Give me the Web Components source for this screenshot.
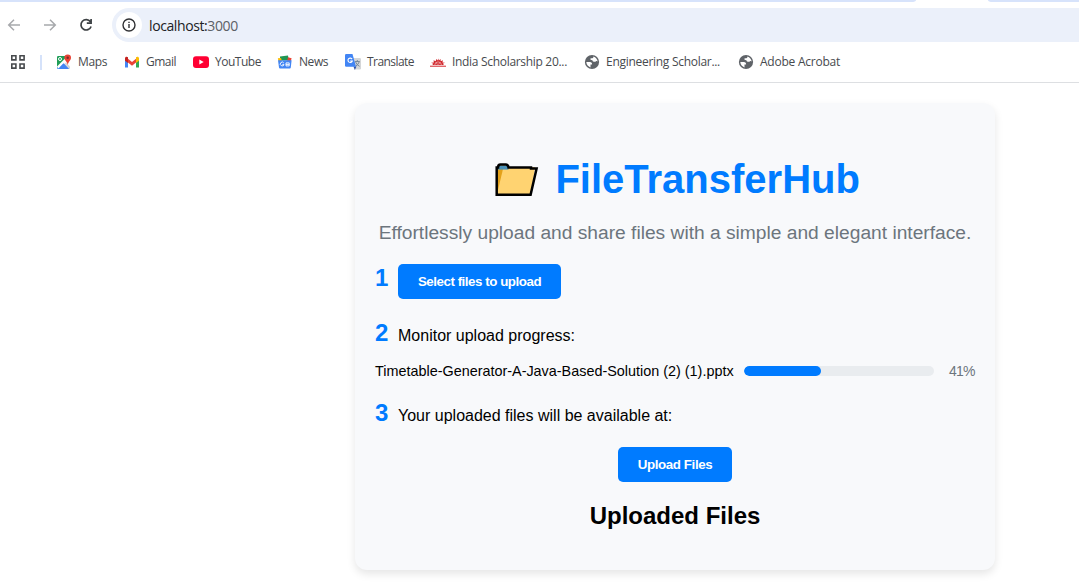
<!DOCTYPE html>
<html lang="en">
<head>
<meta charset="utf-8">
<title>FileTransferHub</title>
<style>
html,body{margin:0;height:100%;overflow:hidden;background:#fff}
body{font-family:"Liberation Sans",Arial,sans-serif;color:#000}
</style>
</head>
<body>
<browser-chrome>
  <bookmark-link icon="maps" label="Maps" style="--w:29px;--next:17px"></bookmark-link>
  <bookmark-link icon="gmail" label="Gmail" style="--w:30px;--next:17px"></bookmark-link>
  <bookmark-link icon="youtube" label="YouTube" style="--w:46px;--next:16px"></bookmark-link>
  <bookmark-link icon="news" label="News" style="--w:29px;--next:17px"></bookmark-link>
  <bookmark-link icon="translate" label="Translate" style="--w:47px;--next:16px"></bookmark-link>
  <bookmark-link icon="sun" label="India Scholarship 20..." style="--w:115px;--next:17px"></bookmark-link>
  <bookmark-link icon="globe" label="Engineering Scholar..." style="--w:114px;--next:18px"></bookmark-link>
  <bookmark-link icon="globe" label="Adobe Acrobat" style="--w:80px;--next:0px"></bookmark-link>
</browser-chrome>
<transfer-card>
  <step-row number="1" style="height:35px;margin-top:20px"><action-button slot="body" style="width:163px;--pull:-.46px">Select files to upload</action-button></step-row>
  <step-row number="2" style="height:28px;margin-top:20px">Monitor upload progress:</step-row>
  <file-progress name="Timetable-Generator-A-Java-Based-Solution (2) (1).pptx" value="41"></file-progress>
  <step-row number="3" style="height:28px;margin-top:19px">Your uploaded files will be available at:</step-row>
  <action-button slot="action" style="width:114px;--pull:-.4px">Upload Files</action-button>
</transfer-card>
<script>
const ICONS = {
maps:`<svg width="16" height="16" viewBox="0 0 16 16"><rect x="1" y="2" width="13" height="13" rx="1.2" fill="#fff"/><path d="M1 3.2Q1 2 2.2 2H13L1 14Z" fill="#1f9d57"/><path d="M1 14L6.5 8.5 13.5 15H2Q1 15 1 14Z" fill="#4285f4"/><path d="M1 12.5L10.5 3l1.5 1.5L2.5 14.5Z" fill="#fff"/><path d="M2.5 14.8L8 9.5l5 5.3Z" fill="#4285f4"/><path d="M10 8.5l4 4V14l-.8 1L8.5 10Z" fill="#d5d5d5"/><circle cx="4" cy="5" r="1.5" fill="none" stroke="#fff"/><path d="M11.7 .5a3.3 3.3 0 0 1 3.3 3.3C15 6.5 12.4 7.5 11.8 11 11 7.5 8.4 6.5 8.4 3.8A3.3 3.3 0 0 1 11.7.5Z" fill="#e94235"/><circle cx="11.7" cy="3.7" r="1.2" fill="#802d27"/></svg>`,
gmail:`<svg width="16" height="16" viewBox="0 0 16 16"><path d="M1 4v9.5h3V6Z" fill="#4285f4"/><path d="M12 6v7.5h3V4Z" fill="#34a853"/><path d="M4 4.8V8.6l4 3.2 4-3.2V4.8L8 8Z" fill="#ea4335"/><path d="M1 4.5C1 2.5 2.8 2.2 4 3.2V9L1 6.8Z" fill="#c5221f"/><path d="M15 4.5c0-2-1.8-2.3-3-1.3V9l3-2.2Z" fill="#fbbc04"/></svg>`,
youtube:`<svg width="16" height="16" viewBox="0 0 16 16"><rect y="2.2" width="16" height="11.8" rx="3" fill="#ff0033"/><path d="M6.3 5.6v5L10.7 8.1Z" fill="#fff"/></svg>`,
news:`<svg width="16" height="16" viewBox="0 0 16 16"><path d="M3 2.5l8-.9.8 5H3Z" fill="#219653"/><path d="M11 3.2l3.6 1-1 3.5H10Z" fill="#ea4335"/><path d="M.8 4.2l3.2-.3 1 3.4H1.6Z" fill="#fbbc04"/><path d="M1 6.2h13.6l-.8 7.4q-.1.9-1 .9H3q-.9 0-1-.9Z" fill="#4285f4"/><path d="M6.8 9A1.9 1.9 0 1 0 7 10.6H5.4M9 8.9h3.2v3H9ZM9 10.4h3.2" fill="none" stroke="#fff" stroke-width=".9"/></svg>`,
translate:`<svg width="16" height="16" viewBox="0 0 16 16"><path d="M6 4h8.8q1.2 0 1.2 1.2v9q0 1.3-1.2 1.3H9.5Z" fill="#d4d6d8"/><path d="M9.8 7.5h5M12.3 6v1.5M10.6 8q1.5 3.5 4 4.3M14.2 8q-1.2 3-4 4.6" fill="none" stroke="#6e8297" stroke-width=".9"/><path d="M8.5 12.5h3L9.8 16Z" fill="#3155a8"/><path d="M1.2 0h6.3L11 12.8H1.2Q0 12.8 0 11.6V1.2Q0 0 1.2 0Z" fill="#4285f4"/><path d="M7.1 5.1A2.2 2.2 0 1 0 7.3 7H5.2" fill="none" stroke="#fff" stroke-width="1.15"/></svg>`,
sun:`<svg width="16" height="16" viewBox="0 0 16 16"><path d="M0 11.7h16v1H0Z" fill="#d1272c"/><path d="M2.2 11L3.4 9.8 1 8.8 3.9 8.4 3.5 6.2 5.7 7.3 6.2 5 7.6 6.6 8.2 4.4 8.9 6.6 10.6 5 10.7 7.3 13 6.2 12.4 8.4 15 8.8 12.8 9.8 14 11Z" fill="#d1272c"/><path d="M4.8 10.9a3.3 3 0 0 1 6.6 0M6.4 8.6l1 2M9.6 8.6l-1 2" fill="none" stroke="#fff" stroke-width=".5"/></svg>`,
globe:`<svg width="16" height="16" viewBox="0 0 16 16"><circle cx="8" cy="8" r="7.1" fill="#5f6368"/><path d="M2.3 8.1h3.5c1.9 0 2.3.9 2.3 2.4h-1.6v2.9C4.3 12.8 2.5 10.8 2.3 8.1ZM9.4 2.5c2.4.7 4 2.7 4.3 5.1-.5-.7-1.1-.8-1.7-.4-.5.7-1.3.8-2.3.5C8.9 7.5 8.5 7 8.4 6.2 6.5 6.2 6 5.4 6.7 4.2H8.3C9.1 4.2 9.4 3.5 9.4 2.5Z" fill="#fff"/></svg>`
};
class BrowserChrome extends HTMLElement{
 constructor(){super();this.attachShadow({mode:"open"}).innerHTML=`<style>
 :host{display:block;height:82px;border-bottom:1px solid #dddfe2;background:#fff}
 .tabs{height:2px;display:grid;grid-template-columns:916px 72px 1fr;background:#fff}
 .tabs i:nth-child(odd){background:#d7e3fb}.tabs i:first-child{border-bottom-right-radius:5px 2px}.tabs i:last-child{border-bottom-left-radius:5px 2px}
 .nav{height:34px;padding-top:6px;display:flex;align-items:center}
 .nav>svg{flex:none}
 .omni{flex:1;height:34px;margin-left:18px;border-radius:17px 0 0 17px;background:#ebf0fa;display:flex;align-items:center;padding-left:4px;font:14px "Open Sans",sans-serif;color:#202124}
 .info{width:26px;height:26px;border-radius:13px;background:#fff;display:grid;place-items:center;margin-right:7px}
 .url{width:90px;letter-spacing:-.4px;white-space:nowrap}.url span{color:#5c6066}
 .marks{height:40px;display:flex;align-items:center}
 .grid{margin-left:10px}.sep{width:2px;height:15px;background:#d5e2fa;margin:0 14px 0 14px}
 </style><div class="tabs"><i></i><i></i><i></i></div><div class="nav">
 <svg style="margin-left:6px" width="16" height="16" fill="none" stroke="#a7a9ac" stroke-width="1.5"><path d="M14 8H3M8 2.7L2.7 8 8 13.3"/></svg>
 <svg style="margin-left:20px" width="16" height="16" fill="none" stroke="#a7a9ac" stroke-width="1.5"><path d="M2 8h11M8 2.7L13.3 8 8 13.3"/></svg>
 <svg style="margin-left:20px" width="16" height="16" fill="none" stroke="#3c4043" stroke-width="1.7"><path d="M12.4 4.7A5.2 5.2 0 1 0 13.1 9.5M13.1 2v4.2H8.8"/></svg>
 <div class="omni"><div class="info"><svg width="16" height="16" viewBox="0 0 16 16"><circle cx="8" cy="8" r="6" fill="none" stroke="#303134" stroke-width="1.4"/><path d="M7.3 7.1h1.4v4H7.3ZM7.3 4.7h1.4v1.4H7.3Z" fill="#303134"/></svg></div><div class="url">localhost:<span>3000</span></div></div></div>
 <div class="marks"><svg class="grid" width="16" height="16" fill="none" stroke="#474a4d" stroke-width="1.6"><path d="M1.8 1.8h4.1v4.1H1.8ZM10 1.8h4.1v4.1H10ZM1.8 10h4.1v4.1H1.8ZM10 10h4.1v4.1H10Z"/></svg><i class="sep"></i><slot></slot></div>`}
}
class BookmarkLink extends HTMLElement{
 connectedCallback(){this.attachShadow({mode:"open"}).innerHTML=`<style>
 :host{display:flex;align-items:center;flex:none;margin-right:var(--next);font:12px/16px "Open Sans",sans-serif;color:#474a4e}
 svg{flex:none;margin-right:6px}span{width:var(--w);white-space:nowrap;display:block}
 </style>${ICONS[this.getAttribute("icon")]}<span><b style="font-weight:400">${this.getAttribute("label")}</b></span>`;
 const label=this.shadowRoot.querySelector("b"),box=this.shadowRoot.querySelector("span");
 const delta=box.clientWidth-label.getBoundingClientRect().width;
 label.style.letterSpacing=delta/label.textContent.length+"px"}
}
class TransferCard extends HTMLElement{
 constructor(){super();this.attachShadow({mode:"open"}).innerHTML=`<style>
 :host{display:block;box-sizing:border-box;width:640px;height:467px;margin:20px 0 0 355px;padding:53px 20px 0;border-radius:12px;background:#f8f9fb;box-shadow:0 4px 8px rgba(0,0,0,.1)}
 h1{margin:0;height:46px;display:flex;align-items:center;font:bold 40px/46px "Liberation Sans",sans-serif;color:#007bff;padding-left:119px}
 h1 svg{margin-right:15.4px}h1 span{white-space:nowrap}
 p{margin:20px 0 0;height:22px;line-height:22px;font-size:19.2px;color:#6c757d;text-align:center;white-space:nowrap}
 .action{margin-top:20px;display:flex;justify-content:center}
 h2{margin:20px 0 0;text-align:center;font:bold 24px/28px "Liberation Sans",sans-serif;color:#000}
 </style><h1><svg width="46" height="36" viewBox="0 0 46 36"><path d="M3 33V6L5 3.3h8L15 6h26L37 33Z" fill="#ffd371"/><path d="M3.5 31V8H9Z" fill="#e3a11a"/><path d="M4 8.6V4.5h10.5V8.6H4Z" fill="#4b91b7"/><path d="M2.7 33.8V6.4H4Q4 3.4 6.5 3.4h5.2q2.3 0 2.8 3H37v1.2h5.6L36.6 33.8Z" fill="none" stroke="#000" stroke-width="2.5"/></svg><span>FileTransferHub</span></h1>
 <p>Effortlessly upload and share files with a simple and elegant interface.</p><slot></slot><div class="action"><slot name="action"></slot></div><h2>Uploaded Files</h2>`}
}
class StepRow extends HTMLElement{
 connectedCallback(){this.attachShadow({mode:"open"}).innerHTML=`<style>
 :host{display:flex;align-items:baseline;font-size:16px;line-height:28px;white-space:nowrap}
 b{width:23px;font-size:24px;color:#007bff;line-height:28px;flex:none}
 :host([number="1"]){align-items:flex-start}
 </style><b>${this.getAttribute("number")}</b><slot></slot><slot name="body"></slot>`}
}
class ActionButton extends HTMLElement{
 constructor(){super();this.attachShadow({mode:"open"}).innerHTML=`<style>
 :host{display:block}button{width:100%;height:35px;border:0;border-radius:5px;padding:0;background:#007bff;color:#fff;font:bold 13.33px/15px "Liberation Sans",sans-serif;white-space:nowrap;letter-spacing:var(--pull)}
 </style><button><slot></slot></button>`}
}
class FileProgress extends HTMLElement{
 connectedCallback(){const v=this.getAttribute("value");this.attachShadow({mode:"open"}).innerHTML=`<style>
 :host{display:flex;align-items:center;height:18px;margin-top:15px;font-size:14.4px;white-space:nowrap}
 .name{width:359px}.track{width:190px;height:10px;margin-left:10px;border-radius:5px;background:#e9ecef;overflow:hidden}
 .fill{height:10px;border-radius:5px;background:#007bff;width:calc(${v}% - 1px)}.pct{margin-left:15px;color:#6c757d;font-size:14px;letter-spacing:-.8px}
 </style><span class="name">${this.getAttribute("name")}</span><div class="track"><div class="fill"></div></div><span class="pct">${v}%</span>`}
}
customElements.define("browser-chrome",BrowserChrome);
customElements.define("bookmark-link",BookmarkLink);
customElements.define("transfer-card",TransferCard);
customElements.define("step-row",StepRow);
customElements.define("action-button",ActionButton);
customElements.define("file-progress",FileProgress);
</script>
</body>
</html>
